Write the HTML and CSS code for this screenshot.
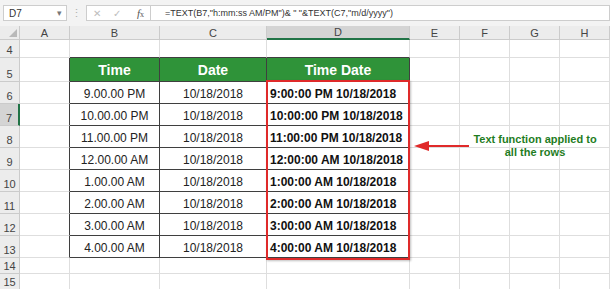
FILE: index.html
```html
<!DOCTYPE html>
<html lang="en">

<head>
    <meta charset="UTF-8">
    <title>TEXT function</title>
    <link rel="stylesheet" href="styles.css">
</head>

<body>
    <div class="formula-bar">
        <div class="name-box">
            <span>D7</span>
            <span class="drop">&#9662;</span>
        </div>
        <div class="grip">&#8942;</div>
        <div class="fx-box">
            <span class="fx-btn">&#10005;</span>
            <span class="fx-btn">&#10003;</span>
            <span class="fx"><i>f</i><small>x</small></span>
        </div>
        <div class="formula">=TEXT(B7,"h:mm:ss AM/PM")&amp; " "&amp;TEXT(C7,"m/d/yyyy")</div>
    </div>

    <div class="sheet-wrap">
        <div class="sheet">
            <!-- column headers -->
            <div class="cell head corner"><span class="tri"></span></div>
            <div class="cell head">A</div>
            <div class="cell head">B</div>
            <div class="cell head">C</div>
            <div class="cell head sel col-sel">D</div>
            <div class="cell head">E</div>
            <div class="cell head">F</div>
            <div class="cell head">G</div>
            <div class="cell head">H</div>

            <!-- row 4 -->
            <div class="cell num">4</div>
            <div class="cell"></div>
            <div class="cell edge-b"></div>
            <div class="cell edge-b"></div>
            <div class="cell edge-b"></div>
            <div class="cell"></div>
            <div class="cell"></div>
            <div class="cell"></div>
            <div class="cell"></div>

            <!-- row 5 -->
            <div class="cell num">5</div>
            <div class="cell edge-r"></div>
            <div class="cell tb th">Time</div>
            <div class="cell tb th">Date</div>
            <div class="cell tb th">Time Date</div>
            <div class="cell"></div>
            <div class="cell"></div>
            <div class="cell"></div>
            <div class="cell"></div>

            <div class="cell num">6</div>
            <div class="cell edge-r"></div>
            <div class="cell tb">9.00.00 PM</div>
            <div class="cell tb">10/18/2018</div>
            <div class="cell tb result">9:00:00 PM 10/18/2018</div>
            <div class="cell"></div>
            <div class="cell"></div>
            <div class="cell"></div>
            <div class="cell"></div>

            <div class="cell num sel row-sel">7</div>
            <div class="cell edge-r"></div>
            <div class="cell tb">10.00.00 PM</div>
            <div class="cell tb">10/18/2018</div>
            <div class="cell tb result">10:00:00 PM 10/18/2018</div>
            <div class="cell"></div>
            <div class="cell"></div>
            <div class="cell"></div>
            <div class="cell"></div>

            <div class="cell num">8</div>
            <div class="cell edge-r"></div>
            <div class="cell tb">11.00.00 PM</div>
            <div class="cell tb">10/18/2018</div>
            <div class="cell tb result">11:00:00 PM 10/18/2018</div>
            <div class="cell"></div>
            <div class="cell"></div>
            <div class="cell"></div>
            <div class="cell"></div>

            <div class="cell num">9</div>
            <div class="cell edge-r"></div>
            <div class="cell tb">12.00.00 AM</div>
            <div class="cell tb">10/18/2018</div>
            <div class="cell tb result">12:00:00 AM 10/18/2018</div>
            <div class="cell"></div>
            <div class="cell"></div>
            <div class="cell"></div>
            <div class="cell"></div>

            <div class="cell num">10</div>
            <div class="cell edge-r"></div>
            <div class="cell tb">1.00.00 AM</div>
            <div class="cell tb">10/18/2018</div>
            <div class="cell tb result">1:00:00 AM 10/18/2018</div>
            <div class="cell"></div>
            <div class="cell"></div>
            <div class="cell"></div>
            <div class="cell"></div>

            <div class="cell num">11</div>
            <div class="cell edge-r"></div>
            <div class="cell tb">2.00.00 AM</div>
            <div class="cell tb">10/18/2018</div>
            <div class="cell tb result">2:00:00 AM 10/18/2018</div>
            <div class="cell"></div>
            <div class="cell"></div>
            <div class="cell"></div>
            <div class="cell"></div>

            <div class="cell num">12</div>
            <div class="cell edge-r"></div>
            <div class="cell tb">3.00.00 AM</div>
            <div class="cell tb">10/18/2018</div>
            <div class="cell tb result">3:00:00 AM 10/18/2018</div>
            <div class="cell"></div>
            <div class="cell"></div>
            <div class="cell"></div>
            <div class="cell"></div>

            <div class="cell num">13</div>
            <div class="cell edge-r"></div>
            <div class="cell tb">4.00.00 AM</div>
            <div class="cell tb">10/18/2018</div>
            <div class="cell tb result">4:00:00 AM 10/18/2018</div>
            <div class="cell"></div>
            <div class="cell"></div>
            <div class="cell"></div>
            <div class="cell"></div>

            <div class="cell num">14</div>
            <div class="cell"></div>
            <div class="cell"></div>
            <div class="cell"></div>
            <div class="cell"></div>
            <div class="cell"></div>
            <div class="cell"></div>
            <div class="cell"></div>
            <div class="cell"></div>

            <div class="cell num">15</div>
            <div class="cell"></div>
            <div class="cell"></div>
            <div class="cell"></div>
            <div class="cell"></div>
            <div class="cell"></div>
            <div class="cell"></div>
            <div class="cell"></div>
            <div class="cell"></div>
        </div>

        <!-- annotation drawn over the sheet -->
        <div class="highlight"></div>
        <svg class="arrow" width="60" height="14" viewBox="0 0 60 14">
            <line x1="14" y1="7" x2="56" y2="7" stroke="#e02a2a" stroke-width="2.2" />
            <polygon points="1,7 16,2 16,12" fill="#e02a2a" />
        </svg>
        <div class="note">Text function applied to<br>all the rows</div>
    </div>
</body>

</html>
```

FILE: styles.css
```css
body {
    margin: 0;
    width: 610px;
    height: 289px;
    overflow: hidden;
    font-family: 'Liberation Sans', Arial, sans-serif;
    background-color: #fff;
    color: #222;
}

/* formula bar */
.formula-bar {
    display: flex;
    align-items: center;
    height: 26px;
    background-color: #f3f3f3;
    box-sizing: border-box;
    padding-left: 3px;
}

.name-box {
    display: flex;
    align-items: center;
    justify-content: space-between;
    width: 64px;
    height: 16px;
    box-sizing: border-box;
    padding: 0 4px 0 5px;
    background-color: #fff;
    border: 1px solid #cdcdcd;
    font-size: 10px;
    color: #333;
}

.name-box .drop {
    font-size: 9px;
    color: #777;
}

.grip {
    width: 19px;
    text-align: center;
    font-size: 11px;
    color: #b0b0b0;
}

.fx-box {
    display: flex;
    align-items: center;
    width: 64px;
    height: 16px;
    box-sizing: border-box;
    background-color: #fff;
    border: 1px solid #cdcdcd;
    border-right: none;
}

.fx-btn {
    width: 20px;
    text-align: center;
    font-size: 10px;
    color: #bdbdbd;
}

.fx {
    margin-left: 10px;
    font-family: 'Liberation Serif', serif;
    font-size: 11px;
    color: #555;
}

.fx small {
    font-size: 8px;
}

.formula {
    flex: 1;
    height: 16px;
    box-sizing: border-box;
    padding-left: 14px;
    background-color: #fff;
    border: 1px solid #cdcdcd;
    font-size: 9px;
    line-height: 14px;
    color: #333;
    white-space: nowrap;
}

/* grid */
.sheet-wrap {
    position: relative;
}

.sheet {
    display: grid;
    grid-template-columns: 20px 50px 90px 107px 143px 50px 50px 50px 50px;
    grid-template-rows: 14px 18px 24px repeat(8, 22px) 16px 16px;
}

.cell {
    display: flex;
    align-items: flex-end;
    justify-content: center;
    box-sizing: border-box;
    padding-bottom: 2px;
    border-right: 1px solid #dedede;
    border-bottom: 1px solid #dedede;
    font-size: 12px;
    white-space: nowrap;
    overflow: hidden;
}

.head {
    align-items: center;
    padding-bottom: 0;
    background-color: #ececec;
    border-color: #cbcbcb;
    font-size: 11px;
    color: #444;
}

.num {
    padding-bottom: 1px;
    background-color: #ececec;
    border-color: #cbcbcb;
    font-size: 11px;
    color: #444;
}

.corner {
    position: relative;
}

.tri {
    position: absolute;
    right: 2px;
    bottom: 2px;
    width: 0;
    height: 0;
    border-left: 8px solid transparent;
    border-bottom: 8px solid #b9b9b9;
}

.sel {
    background-color: #d4d4d4;
}

.col-sel {
    border-bottom: 2px solid #217346;
}

.row-sel {
    border-right: 2px solid #217346;
}

.edge-r {
    border-right-color: #3f3f3f;
}

.edge-b {
    border-bottom-color: #3f3f3f;
}

.tb {
    border-right-color: #3f3f3f;
    border-bottom-color: #3f3f3f;
}

.th {
    align-items: center;
    padding-bottom: 0;
    background-color: #2f9339;
    color: #fff;
    font-size: 14px;
    font-weight: bold;
}

.result {
    justify-content: flex-start;
    padding-left: 3px;
    font-weight: bold;
    color: #111;
}

/* annotation */
.highlight {
    position: absolute;
    left: 266px;
    top: 54px;
    width: 144px;
    height: 180px;
    box-sizing: border-box;
    border: 2px solid #df2a2a;
    box-shadow: 1px 1px 2px rgba(0, 0, 0, 0.25);
}

.arrow {
    position: absolute;
    left: 413px;
    top: 113px;
}

.note {
    position: absolute;
    left: 466px;
    top: 107px;
    width: 138px;
    text-align: center;
    font-size: 11px;
    line-height: 13px;
    font-weight: bold;
    color: #1f7d1f;
}
```
